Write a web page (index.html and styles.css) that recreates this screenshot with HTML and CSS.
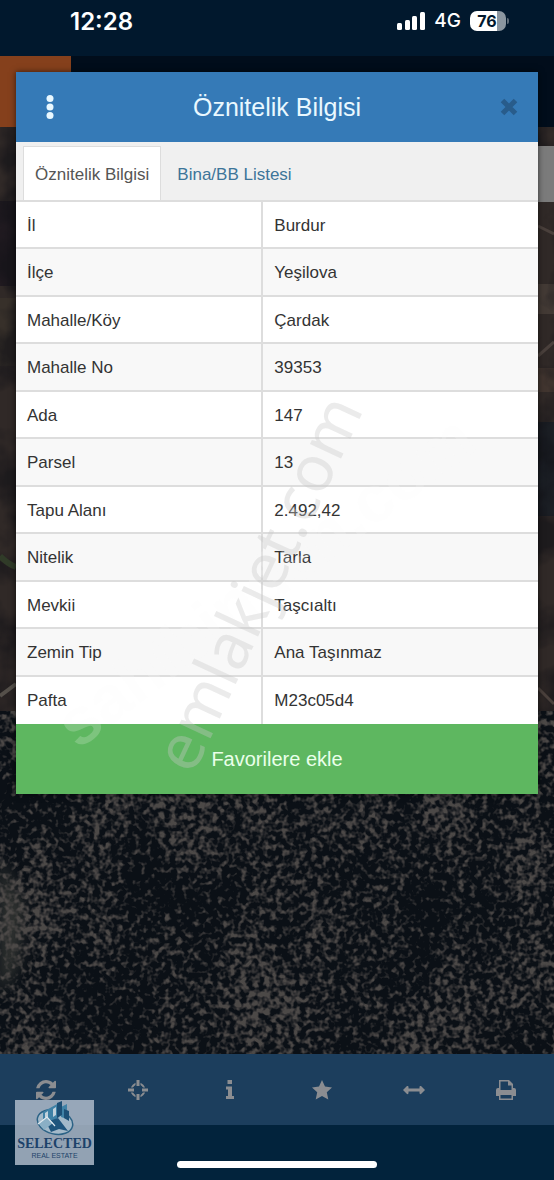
FILE: index.html
```html
<!DOCTYPE html>
<html lang="tr">
<head>
<meta charset="utf-8">
<meta name="viewport" content="width=device-width, initial-scale=1">
<title>Öznitelik Bilgisi</title>
<link rel="stylesheet" href="styles.css">
</head>
<body>

<div class="statusbar">
  <span class="clock">12:28</span>
  <div class="status-icons">
    <svg class="signal" viewBox="0 0 28 18" aria-hidden="true">
      <rect x="0" y="11" width="5" height="7" rx="1.5"/>
      <rect x="8" y="8" width="5" height="10" rx="1.5"/>
      <rect x="15" y="4" width="5" height="14" rx="1.5"/>
      <rect x="23" y="0" width="5" height="18" rx="1.5"/>
    </svg>
    <span class="network">4G</span>
    <span class="battery">76</span>
  </div>
</div>

<main class="map">
  <svg class="satellite" viewBox="0 0 554 998" preserveAspectRatio="xMidYMid slice" aria-hidden="true">
    <defs>
      <filter id="scrub" x="0" y="0" width="100%" height="100%" color-interpolation-filters="sRGB">
        <feTurbulence type="fractalNoise" baseFrequency="0.17" numOctaves="2" seed="8" result="fine"/>
        <feTurbulence type="fractalNoise" baseFrequency="0.018 0.01" numOctaves="3" seed="21" result="coarse"/>
        <feComposite in="fine" in2="coarse" operator="arithmetic" k2="0.7" k3="0.3"/>
        <feColorMatrix values="0 0 0 0 .30  0 0 0 0 .285  0 0 0 0 .28  0 0 0 5 -2.35"/>
        <feGaussianBlur stdDeviation="0.6"/>
      </filter>
      <filter id="patches" x="0" y="0" width="100%" height="100%" color-interpolation-filters="sRGB">
        <feTurbulence type="fractalNoise" baseFrequency="0.018" numOctaves="4" seed="3"/>
        <feColorMatrix values="0 0 0 0 .07  0 0 0 0 .07  0 0 0 0 .09  0 4 0 0 -1.7"/>
      </filter>
      <filter id="soft" x="-100%" y="-50%" width="300%" height="200%"><feGaussianBlur stdDeviation="7"/></filter>
    </defs>
    <rect width="554" height="998" fill="#302927"/>
    <rect y="145" width="16" height="85" fill="#201a20"/>
    <rect y="242" width="16" height="68" fill="#37302a"/>
    <rect x="538" y="228" width="16" height="30" fill="#433a35"/>
    <rect x="538" y="312" width="16" height="24" fill="#41352f"/>
    <rect x="538" y="366" width="16" height="94" fill="#1c2026"/>
    <rect width="554" height="660" filter="url(#patches)" opacity=".6"/>
    <path d="M0 500q8 8 16 11" fill="none" stroke="#303b28" stroke-width="6"/>
    <path d="M0 640l16-12" stroke="#55504a" stroke-width="4"/>
    <path d="M538 170l16 8M538 300l16-14M538 632l16 16" stroke="#4a403c" stroke-width="3"/>
    <rect y="655" width="554" height="343" fill="#0b1016"/>
    <path d="M0 800l24 50-6 60-18 30z" fill="#55554c" opacity=".5" filter="url(#soft)"/>
    <rect y="655" width="554" height="343" filter="url(#scrub)"/>
  </svg>
  <div class="navbar"><div class="navbar-brand"></div></div>
  <div class="map-button"></div>

  <section class="dialog" role="dialog" aria-labelledby="dialog-title">
    <header class="dialog-header">
      <button class="menu" aria-label="Menü">
        <svg viewBox="0 0 8 24"><circle cx="4" cy="3.500" r="3.500"/><circle cx="4" cy="12" r="3.500"/><circle cx="4" cy="20.500" r="3.500"/></svg>
      </button>
      <h1 id="dialog-title">Öznitelik Bilgisi</h1>
      <button class="close" aria-label="Kapat">
        <svg viewBox="0 0 18 18"><path d="M2.500 2.500l13 13M15.500 2.500l-13 13"/></svg>
      </button>
    </header>
    <nav class="tabs">
      <a class="tab active" href="#oznitelik">Öznitelik Bilgisi</a>
      <a class="tab" href="#bina">Bina/BB Listesi</a>
    </nav>
    <table class="attributes">
      <tr><th scope="row">İl</th><td>Burdur</td></tr>
      <tr><th scope="row">İlçe</th><td>Yeşilova</td></tr>
      <tr><th scope="row">Mahalle/Köy</th><td>Çardak</td></tr>
      <tr><th scope="row">Mahalle No</th><td>39353</td></tr>
      <tr><th scope="row">Ada</th><td>147</td></tr>
      <tr><th scope="row">Parsel</th><td>13</td></tr>
      <tr><th scope="row">Tapu Alanı</th><td>2.492,42</td></tr>
      <tr><th scope="row">Nitelik</th><td>Tarla</td></tr>
      <tr><th scope="row">Mevkii</th><td>Taşcıaltı</td></tr>
      <tr><th scope="row">Zemin Tip</th><td>Ana Taşınmaz</td></tr>
      <tr><th scope="row">Pafta</th><td>M23c05d4</td></tr>
    </table>
    <button class="favorite">Favorilere ekle</button>
    <svg class="watermark" viewBox="0 0 522 722" aria-hidden="true">
      <text class="wm-sahibinden" transform="translate(62 678) rotate(-37)">sahibinden.com</text>
      <text class="wm-emlakjet" transform="translate(177 704) rotate(-65)">emlakjet.com</text>
    </svg>
  </section>
</main>

<nav class="toolbar">
  <button aria-label="Yenile">
    <svg viewBox="0 0 1536 1536"><path d="M1511 928q0 5-1 7-64 268-268 434.500T764 1536q-146 0-282.500-55T238 1324l-129 129q-19 19-45 19t-45-19-19-45V960q0-26 19-45t45-19h448q26 0 45 19t19 45-19 45l-137 137q71 66 161 102t187 36q134 0 250-65t186-179q11-17 53-117 8-23 30-23h192q13 0 22.500 9.500t9.500 22.500zm25-800v448q0 26-19 45t-45 19h-448q-26 0-45-19t-19-45 19-45l138-138Q969 256 768 256q-134 0-250 65T332 500q-11 17-53 117-8 23-30 23H50q-13 0-22.500-9.500T18 608v-7q65-268 270-434.500T768 0q146 0 284 55.500T1297 212l130-129q19-19 45-19t45 19 19 45z"/></svg>
  </button>
  <button aria-label="Konum">
    <svg viewBox="0 0 20 20"><circle class="ring" cx="10" cy="10" r="6.500"/><path class="gap" d="M10 0v6M10 14v6M0 10h6M14 10h6"/><path class="line" d="M10 0v6M10 14v6M0 10h6M14 10h6"/></svg>
  </button>
  <button aria-label="Bilgi">
    <svg viewBox="0 0 20 20"><path d="M7.500 0h4.500v4H7.500zM6 6.500h6V16h2v3H6v-3h2V9.500H6z"/></svg>
  </button>
  <button aria-label="Favoriler">
    <svg viewBox="0 0 20 20"><path d="M10 0l3 6.600 7 .8-5.200 4.900 1.500 7.200L10 16l-6.300 3.500 1.500-7.200L0 7.400l7-.8z"/></svg>
  </button>
  <button aria-label="Ölç">
    <svg class="wide" viewBox="0 0 22 20"><path d="M0 10l4-4q1.500-.5 1.500 1V8.500h11V7q0-1.500 1.500-1l4 4-4 4q-1.500.5-1.500-1v-1.500h-11V13q0 1.500-1.500 1z"/></svg>
  </button>
  <button aria-label="Yazdır">
    <svg viewBox="0 0 20 20"><path fill-rule="evenodd" d="M3 0h10l4 4v4h1q2 0 2 2v6h-3v4H3v-4H0v-6q0-2 2-2h1zM4.500 1.500V10h11V5.500H12v-4zM4.500 15v3.500h11V15z"/></svg>
  </button>
</nav>

<footer class="bottom">
  <div class="logo">
    <svg viewBox="0 0 44 36" aria-hidden="true">
      <ellipse cx="22" cy="22" rx="18" ry="12" transform="rotate(14 22 22)" fill="#a3b9c9" stroke="#2c6386" stroke-width="1.500"/>
      <path fill="#3f81a6" d="M10 12l7-4v15l-7-4zM17 8l9-5v14l-9 7zM28 7l6-3v15l-6-2z"/>
      <path fill="#1c4f76" d="M24 3l5-2v14l-5 3zM31 9l5 2v10l-5-3z"/>
      <path fill="#c0d1dc" d="M12 13l3-2v6l-3 1zM20 9l3-2v8l-3 2z"/>
      <path fill="#1f557d" d="M13 22l12-4 10 13-9-2-8 3-2-4z"/>
      <path fill="#8aafc5" d="M5 23l9-6 6 6-9 7z"/>
      <path fill="none" stroke="#e0e9ef" stroke-width="1.200" d="M5 24l9-7 8 9"/>
    </svg>
    <strong>SELECTED</strong>
    <small>REAL ESTATE</small>
  </div>
  <div class="home-indicator"></div>
</footer>

</body>
</html>
```
FILE: styles.css
```css
* {
  box-sizing: border-box;
}

body {
  margin: 0;
  min-height: 100vh;
  display: flex;
  flex-direction: column;
  background: #02233c;
  color: #333;
  font: 17px/24px "Liberation Sans", Arial, sans-serif;
}

button {
  margin: 0;
  padding: 0;
  border: 0;
  background: none;
  font: inherit;
}

svg {
  display: block;
}

/* status bar */
.statusbar {
  display: flex;
  justify-content: space-between;
  height: 56px;
  padding: 9px 48px 0 70px;
  background: #01182d;
  color: #fff;
}

.clock {
  font: 600 24px/26px Inter, sans-serif;
}

.status-icons {
  display: flex;
  align-items: center;
  gap: 9px;
  height: 24px;
}

.signal {
  width: 28px;
  height: 18px;
  fill: #fff;
}

.network {
  font: 500 19px/24px Inter, sans-serif;
}

.battery {
  position: relative;
  width: 36px;
  padding-right: 2px;
  border-radius: 7px;
  background: linear-gradient(90deg, #fff 76%, #8b96a0 76%);
  color: #01182d;
  text-align: center;
  font: 700 16px/20px Inter, sans-serif;
}

.battery::after {
  content: "";
  position: absolute;
  top: 7px;
  right: -3px;
  width: 2px;
  height: 6px;
  border-radius: 0 2px 2px 0;
  background: #5d6b78;
}

/* map */
.map {
  position: relative;
  flex: 1;
  padding: 16px 16px 260px;
}

.satellite {
  position: absolute;
  top: 0;
  left: 0;
  width: 100%;
  height: 100%;
}

.navbar {
  position: absolute;
  top: 0;
  left: 0;
  right: 0;
  height: 71px;
  background: #010d1b;
}

.navbar-brand {
  width: 71px;
  height: 100%;
  background: #85401c;
}

.map-button {
  position: absolute;
  top: 90px;
  right: 0;
  width: 60px;
  height: 56px;
  background: #7b7b7b;
}

/* dialog */
.dialog {
  position: relative;
  background: #fff;
  box-shadow: 0 0 6px rgba(0, 0, 0, .6);
}

.dialog-header {
  display: flex;
  align-items: center;
  justify-content: space-between;
  height: 70px;
  padding: 0 20px 0 30px;
  background: #357ab7;
  color: #e9f8ff;
}

.dialog-header h1 {
  margin: 0;
  font-size: 25px;
  line-height: 32px;
  font-weight: normal;
}

.menu svg {
  width: 8px;
  height: 24px;
  fill: #e9f8ff;
}

.close svg {
  width: 18px;
  height: 18px;
  fill: none;
  stroke: #285c8b;
  stroke-width: 5;
}

.tabs {
  display: flex;
  gap: 4px;
  height: 60px;
  padding: 4px 7px 0;
  border-bottom: 2px solid #ddd;
  background: #f0f0f0;
}

.tab {
  padding: 16px 11px;
  border: 1px solid transparent;
  border-bottom: 0;
  color: #3d7599;
  text-decoration: none;
}

.tab.active {
  border-color: #ddd;
  background: #fff;
  color: #555;
}

.attributes {
  width: 100%;
  border-collapse: separate;
  border-spacing: 0;
}

.attributes th,
.attributes td {
  height: 47px;
  padding: 2px 11px 0;
  border-bottom: 2px solid #ddd;
  text-align: left;
  font-weight: normal;
}

.attributes th {
  width: 47%;
}

.attributes td {
  border-left: 2px solid #ddd;
}

.attributes tr:nth-child(even) > * {
  height: 48px;
  background: #f8f8f8;
}

.attributes tr:last-child > * {
  padding-top: 0;
  border-bottom: 0;
}

.favorite {
  display: block;
  width: 100%;
  height: 70px;
  background: #5eb760;
  color: #eaffea;
  font-size: 20px;
}

.watermark {
  position: absolute;
  top: 0;
  left: 0;
  width: 100%;
  height: 100%;
  pointer-events: none;
}

.wm-emlakjet {
  fill: rgba(200, 200, 200, .36);
  font: 64px "Noto Sans", sans-serif;
}

.wm-sahibinden {
  fill: rgba(248, 248, 248, .2);
  font: bold 66px "Liberation Sans", sans-serif;
}

/* bottom bars */
.toolbar {
  display: grid;
  grid-template-columns: repeat(6, 1fr);
  height: 71px;
  padding-right: 2px;
  background: #1c3e5d;
}

.toolbar button {
  display: flex;
  align-items: center;
  justify-content: center;
}

.toolbar svg {
  width: 20px;
  height: 20px;
  fill: #8b8d91;
}

.toolbar svg.wide {
  width: 22px;
}

.toolbar .ring {
  fill: none;
  stroke: #8b8d91;
  stroke-width: 2;
}

.toolbar .line {
  stroke: #8b8d91;
  stroke-width: 3;
}

.toolbar .gap {
  stroke: #1c3e5d;
  stroke-width: 5;
}

.bottom {
  position: relative;
  display: flex;
  align-items: flex-end;
  justify-content: center;
  height: 55px;
  padding-bottom: 12px;
}

.home-indicator {
  width: 36%;
  height: 7px;
  border-radius: 4px;
  background: #fff;
}

.logo {
  position: absolute;
  left: 15px;
  bottom: 15px;
  display: flex;
  flex-direction: column;
  align-items: center;
  width: 79px;
  height: 65px;
  background: rgba(178, 190, 205, .82);
  color: #1d426a;
}

.logo svg {
  width: 44px;
  height: 36px;
}

.logo strong {
  font: bold 14px/16px "Liberation Serif", serif;
}

.logo small {
  font: 7px/8px "Liberation Sans", sans-serif;
}
```
